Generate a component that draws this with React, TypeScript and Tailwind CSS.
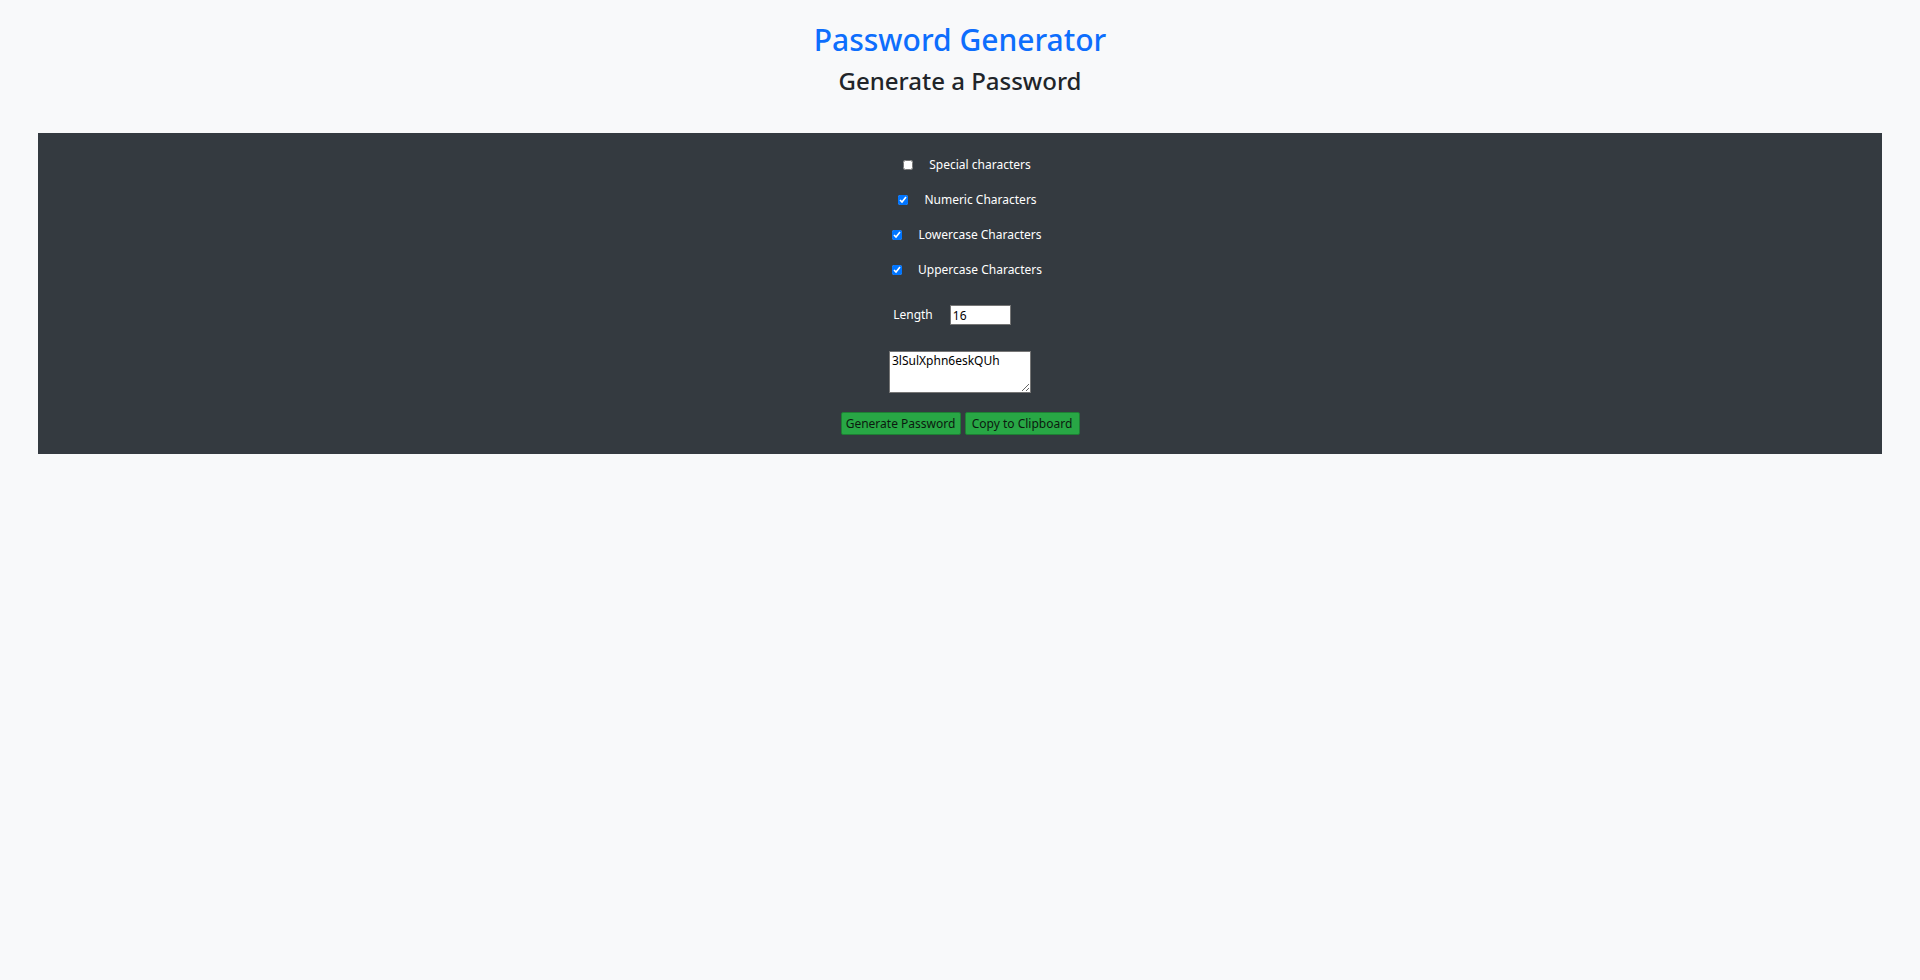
import { useState } from "react";

const FONT = "font-['Segoe_UI','Noto_Sans',sans-serif]";

const options = [
    { key: "special", label: "Special characters", checked: false, shift: "pl-[14px]" },
    { key: "numeric", label: "Numeric Characters", checked: true, shift: "pl-[15px]" },
    { key: "lower", label: "Lowercase Characters", checked: true, shift: "pl-[14px]" },
    { key: "upper", label: "Uppercase Characters", checked: true, shift: "pl-[14px]" },
];

const App = () => {
    const [checks, setChecks] = useState<Record<string, boolean>>(
        Object.fromEntries(options.map((o) => [o.key, o.checked]))
    );
    const [length, setLength] = useState("16");
    const [password] = useState("3lSulXphn6eskQUh");

    return (
        <div className={`min-h-screen bg-[#f8f9fa] ${FONT}`}>
            <div className="flex flex-col items-center pt-[21px]">
                <h1 className="text-[30px] leading-[38px] font-medium text-[#0d6efd]">
                    Password Generator
                </h1>
                <h2 className="text-[24px] leading-[31px] font-medium text-[#212529] mt-[6px]">
                    Generate a Password
                </h2>
            </div>

            <div className="mx-[38px] mt-[37px] bg-[#343a40] pt-[21px] pb-[19px] flex flex-col items-center text-white text-[12px]">
                {options.map((o) => (
                    <div
                        key={o.key}
                        className={`flex items-center gap-[16px] h-[22px] mb-[13px] ${o.shift}`}
                    >
                        <input
                            type="checkbox"
                            className="w-[10px] h-[10px] accent-[#0075ff] m-0"
                            checked={checks[o.key]}
                            onChange={(e) =>
                                setChecks({ ...checks, [o.key]: e.target.checked })
                            }
                        />
                        <label>{o.label}</label>
                    </div>
                ))}

                <div className="flex items-center gap-[17px] pr-[16px] mt-[11px]">
                    <label>Length</label>
                    <input
                        type="text"
                        value={length}
                        onChange={(e) => setLength(e.target.value)}
                        className="w-[61px] h-[20px] bg-white text-black border border-[#767676] px-[2px] text-[12px] outline-none"
                    />
                </div>

                <textarea
                    readOnly
                    value={password}
                    className="mt-[26px] w-[142px] h-[42px] bg-white text-black border border-[#767676] px-[2px] py-0 text-[12px] leading-[18px]"
                />

                <div className="flex gap-[4px] mt-[19px]">
                    <button className="w-[120px] h-[23px] bg-[#28a745] border border-[#1e7e34] rounded-[2px] text-[#0b1a0f] text-[12px] leading-none">
                        Generate Password
                    </button>
                    <button className="w-[115px] h-[23px] bg-[#28a745] border border-[#1e7e34] rounded-[2px] text-[#0b1a0f] text-[12px] leading-none">
                        Copy to Clipboard
                    </button>
                </div>
            </div>
        </div>
    );
};

export default App;
